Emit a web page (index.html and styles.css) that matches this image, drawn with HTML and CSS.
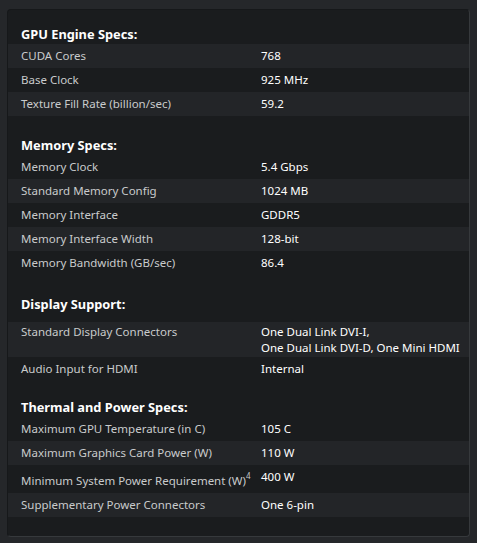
FILE: index.html
```html
<!DOCTYPE html>
<html>
<head>
<meta charset="utf-8">
<link rel="stylesheet" href="styles.css">
</head>
<body>
<div class="panel">
  <table class="specs">
    <colgroup><col class="ck"><col class="cv"></colgroup>
    <tbody>
      <tr class="head first"><th colspan="2">GPU Engine Specs:</th></tr>
      <tr class="alt"><td class="k">CUDA Cores</td><td class="v">768</td></tr>
      <tr><td class="k">Base Clock</td><td class="v">925 MHz</td></tr>
      <tr class="alt"><td class="k">Texture Fill Rate (billion/sec)</td><td class="v">59.2</td></tr>

      <tr class="head"><th colspan="2">Memory Specs:</th></tr>
      <tr><td class="k">Memory Clock</td><td class="v">5.4 Gbps</td></tr>
      <tr class="alt"><td class="k">Standard Memory Config</td><td class="v">1024 MB</td></tr>
      <tr><td class="k">Memory Interface</td><td class="v">GDDR5</td></tr>
      <tr class="alt"><td class="k">Memory Interface Width</td><td class="v">128-bit</td></tr>
      <tr><td class="k">Memory Bandwidth (GB/sec)</td><td class="v">86.4</td></tr>

      <tr class="head spaced"><th colspan="2">Display Support:</th></tr>
      <tr class="alt multi"><td class="k">Standard Display Connectors</td><td class="v">One Dual Link DVI-I,<br>One Dual Link DVI-D, One Mini HDMI</td></tr>
      <tr><td class="k">Audio Input for HDMI</td><td class="v">Internal</td></tr>

      <tr class="head tight"><th colspan="2">Thermal and Power Specs:</th></tr>
      <tr><td class="k">Maximum GPU Temperature (in C)</td><td class="v">105 C</td></tr>
      <tr class="alt"><td class="k">Maximum Graphics Card Power (W)</td><td class="v">110 W</td></tr>
      <tr class="tall"><td class="k">Minimum System Power Requirement (W)<sup>4</sup></td><td class="v">400 W</td></tr>
      <tr class="alt"><td class="k">Supplementary Power Connectors</td><td class="v">One 6-pin</td></tr>
    </tbody>
  </table>
</div>
</body>
</html>
```

FILE: styles.css
```css
html, body {
  margin: 0;
  padding: 0;
  background: #25272a;
}
body {
  padding: 9px 7px 8px 7px;
  font-family: "Noto Sans", "DejaVu Sans", sans-serif;
  font-size: 11.5px;
}
.panel {
  width: 463px;
  box-sizing: border-box;
  background: #1a1c1e;
  border: 1px solid #16181a;
  border-right-color: #36393c;
  border-bottom-color: #36393c;
  border-radius: 4px;
  padding: 14px 0 19px 0;
}
.specs {
  width: 100%;
  table-layout: fixed;
  border-collapse: collapse;
  border-spacing: 0;
}
.specs col.ck {
  width: 253px;
}
.specs th {
  text-align: left;
  font-weight: bold;
  font-size: 12.8px;
  color: #ffffff;
  padding: 19px 13px 0 13px;
  height: 20px;
  line-height: 20px;
  vertical-align: middle;
}
.specs tr.first th {
  padding-top: 0;
}
.specs tr.spaced th {
  padding-top: 19px;
  padding-bottom: 8px;
}
.specs tr.tight th {
  padding-top: 16px;
}
.specs td {
  padding: 4px 13px;
  line-height: 16px;
  vertical-align: top;
  white-space: nowrap;
}
.specs td.k {
  color: #c9cbcc;
}
.specs td.v {
  color: #ffffff;
  padding-left: 0;
  padding-right: 0;
}
.specs tr.alt td {
  background: #232528;
}
.specs tr.multi td {
  padding-top: 2px;
  padding-bottom: 2px;
  line-height: 15.5px;
}
.specs tr.tall td.k {
  padding-top: 8px;
}
.specs sup {
  font-size: 8px;
  line-height: 0;
  vertical-align: 6px;
}
```
